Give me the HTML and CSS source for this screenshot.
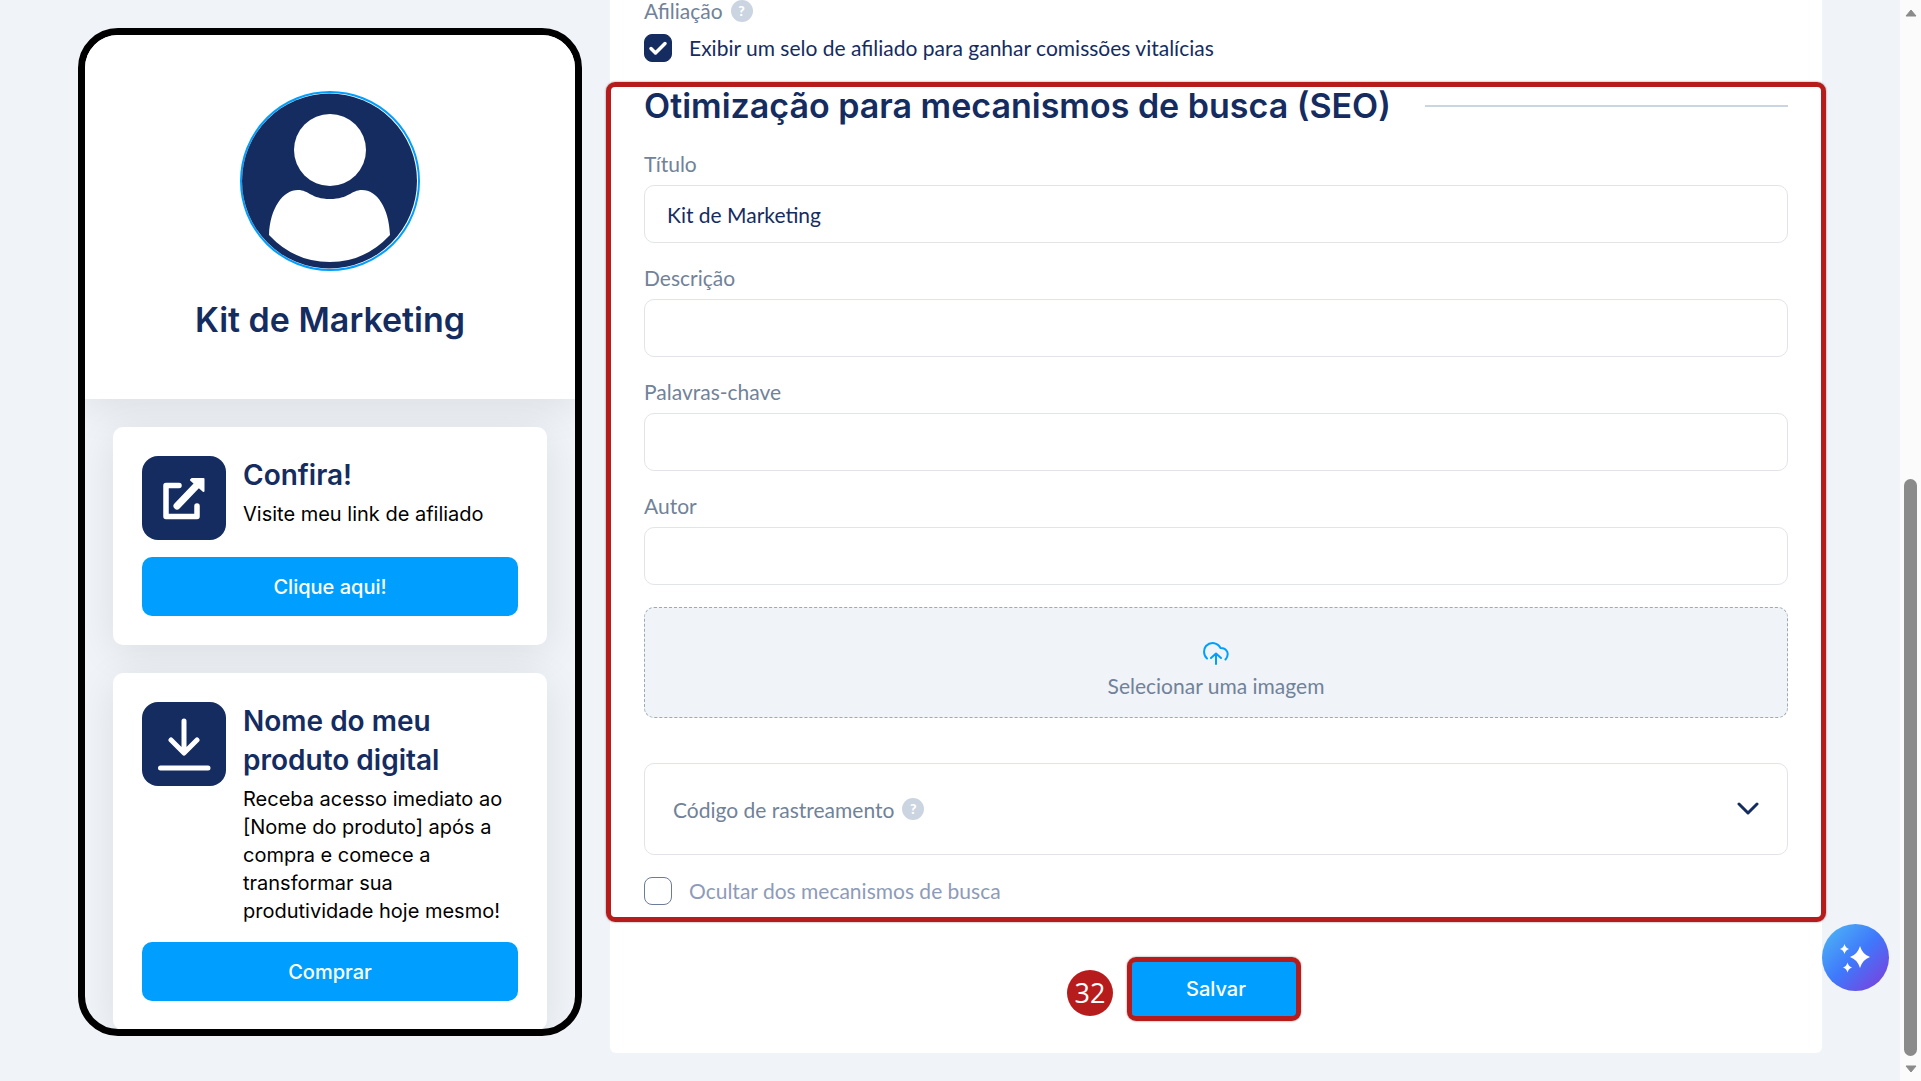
FILE: index.html
```
<!DOCTYPE html>
<html lang="pt-BR">
<head>
    <meta charset="UTF-8">
    <meta name="viewport" content="width=device-width, initial-scale=1.0">
    <title>Kit de Marketing</title>
    <link rel="stylesheet" href="styles.css">
</head>
<body>
    <div class="page">
        <!-- Phone Preview -->
        <aside class="phone">
            <div class="phone-header">
                <svg class="avatar" viewBox="0 0 180 180">
                    <circle cx="90" cy="90" r="89" fill="#fff" stroke="#009fff" stroke-width="2"/>
                    <circle cx="89.500" cy="90" r="87.500" fill="#152c61"/>
                    <circle cx="90" cy="59" r="36" fill="#fff"/>
                    <path d="M29 144C30 117 43 99 58 99C69 99 71 108 90 108C109 108 111 99 122 99C137 99 149 117 150 144Q125 171 90 171Q54 171 29 144Z" fill="#fff"/>
                </svg>
                <h1 class="phone-title">Kit de Marketing</h1>
            </div>

            <div class="cards">
                <div class="card">
                    <div class="card-top">
                        <svg class="card-icon" viewBox="0 0 84 84">
                            <rect width="84" height="84" rx="16" fill="#152c61"/>
                            <path d="M37 29.500H24V60.500H55V50" fill="none" stroke="#fff" stroke-width="5.500" stroke-linecap="round" stroke-linejoin="round"/>
                            <path d="M35 50L56 28" stroke="#fff" stroke-width="7" stroke-linecap="round"/>
                            <path d="M50 23H61.500V35L49 24Z" fill="#fff" stroke="#fff" stroke-width="2" stroke-linejoin="round"/>
                        </svg>
                        <div class="card-text">
                            <h2 class="card-title">Confira!</h2>
                            <p class="card-description">Visite meu link de afiliado</p>
                        </div>
                    </div>
                    <button class="action-btn">Clique aqui!</button>
                </div>

                <div class="card">
                    <div class="card-top">
                        <svg class="card-icon" viewBox="0 0 84 84">
                            <rect width="84" height="84" rx="16" fill="#152c61"/>
                            <path d="M42 19V50M29 38L42 51L55 38M18.500 66H66" fill="none" stroke="#fff" stroke-width="5" stroke-linecap="round" stroke-linejoin="round"/>
                        </svg>
                        <div class="card-text">
                            <h2 class="card-title">Nome do meu produto digital</h2>
                            <p class="card-description">Receba acesso imediato ao [Nome do produto] após a compra e comece a transformar sua produtividade hoje mesmo!</p>
                        </div>
                    </div>
                    <button class="action-btn">Comprar</button>
                </div>
            </div>
        </aside>

        <!-- Settings Panel -->
        <main class="panel">
            <div class="panel-row">
                <span>Afiliação</span>
                <span class="help">?</span>
            </div>
            <label class="check">
                <span class="check-box">
                    <input type="checkbox" checked>
                    <svg viewBox="0 0 28 28"><path d="M7 14.500L11.500 19L21 9.500" fill="none" stroke="#fff" stroke-width="3.500" stroke-linecap="round" stroke-linejoin="round"/></svg>
                </span>
                Exibir um selo de afiliado para ganhar comissões vitalícias
            </label>

            <!-- SEO -->
            <section class="seo marked">
                <div class="seo-heading">
                    <h2>Otimização para mecanismos de busca (SEO)</h2>
                </div>
                <div class="fields">
                    <div class="field">
                        <label for="seo-title">Título</label>
                        <input type="text" id="seo-title" value="Kit de Marketing">
                    </div>
                    <div class="field">
                        <label for="seo-description">Descrição</label>
                        <input type="text" id="seo-description">
                    </div>
                    <div class="field">
                        <label for="seo-keywords">Palavras-chave</label>
                        <input type="text" id="seo-keywords">
                    </div>
                    <div class="field">
                        <label for="seo-author">Autor</label>
                        <input type="text" id="seo-author">
                    </div>
                </div>
                <button class="upload">
                    <svg viewBox="0 0 26 24" width="26" height="24"><path d="M4 16.500C0 13 .5 7 3 4C8-1 15 1 17.500 6C24 6 27 12 22.500 17.500M13 22V12M8 16L13 11.500L18 16" fill="none" stroke="#009fff" stroke-width="2" stroke-linecap="round" stroke-linejoin="round"/></svg>
                    <span>Selecionar uma imagem</span>
                </button>
                <button class="tracking">
                    <span>Código de rastreamento</span>
                    <span class="help">?</span>
                    <svg class="chevron" viewBox="0 0 22 14" width="22" height="14"><path d="M2 2L11 11L20 2" fill="none" stroke="#152c61" stroke-width="3" stroke-linecap="round" stroke-linejoin="round"/></svg>
                </button>
                <label class="check check-muted">
                    <span class="check-box">
                        <input type="checkbox">
                    </span>
                    Ocultar dos mecanismos de busca
                </label>
            </section>

            <div class="actions">
                <div class="save marked">
                    <span class="step">32</span>
                    <button class="save-btn">Salvar</button>
                </div>
            </div>
        </main>
    </div>

    <!-- Scrollbar -->
    <div class="scrollbar">
        <svg viewBox="0 0 12 8" width="12" height="8"><path d="M6 1L11 7H1Z" fill="#8b8b8b" stroke="#8b8b8b" stroke-linejoin="round"/></svg>
        <div class="scroll-track"><div class="scroll-thumb"></div></div>
        <svg viewBox="0 0 12 8" width="12" height="8"><path d="M6 7L1 1H11Z" fill="#8b8b8b" stroke="#8b8b8b" stroke-linejoin="round"/></svg>
    </div>

    <!-- Assistant -->
    <button class="assistant" aria-label="Assistente">
        <svg viewBox="0 0 67 67"><path d="M38 22Q40.500 30.500 48 33Q40.500 35.500 38 44Q35.500 35.500 28 33Q35.500 30.500 38 22ZM22.500 20Q23.500 24 27 25Q23.500 26 22.500 30Q21.500 26 18 25Q21.500 24 22.500 20ZM25.500 38.500Q26.500 42.500 30 43.500Q26.500 44.500 25.500 48.500Q24.500 44.500 21 43.500Q24.500 42.500 25.500 38.500Z" fill="#fff"/></svg>
    </button>
</body>
</html>
```
FILE: styles.css
```
/* Global Styles */
:root {
    --navy: #152c61;
    --blue: #009fff;
    --red: #b71c1c;
    --muted: #718299;
    --line: #e1e4e8;
    --background: #f0f3f8;
    --shadow: 0 8px 40px rgba(0, 0, 0, 0.09);
    --heading-font: Inter, "Liberation Sans", sans-serif;
    --form-font: Lato, "Open Sans", sans-serif;
}

* {
    box-sizing: border-box;
}

body {
    display: flex;
    height: 100vh;
    margin: 0;
    overflow: hidden;
    background-color: var(--background);
    color: var(--navy);
    font-family: var(--heading-font);
    font-size: 20px;
}

h1, h2, p {
    margin: 0;
}

button {
    font-family: inherit;
    font-size: 20px;
    cursor: pointer;
}

.page {
    flex: 1;
    display: flex;
    align-items: flex-start;
    gap: 28px;
    padding: 0 78px;
}

/* Phone Preview */
.phone {
    flex: 0 0 504px;
    aspect-ratio: 1 / 2;
    min-height: 0;
    margin-top: 28px;
    border: 7px solid #000;
    border-radius: 40px;
    overflow: hidden;
    background-color: var(--background);
}

.phone-header {
    display: flex;
    flex-direction: column;
    align-items: center;
    gap: 26px;
    padding: 56px 28px;
    background-color: #fff;
    box-shadow: var(--shadow);
}

.avatar {
    width: 180px;
    height: 180px;
}

.phone-title {
    font-size: 34px;
    font-weight: 600;
    line-height: 46px;
}

.cards {
    display: flex;
    flex-direction: column;
    gap: 28px;
    padding: 28px;
}

.card {
    padding: 29px;
    border-radius: 10px;
    background-color: #fff;
    box-shadow: var(--shadow);
}

.card-top {
    display: flex;
    align-items: flex-start;
    gap: 17px;
    margin-bottom: 17px;
}

.card-icon {
    flex: none;
    width: 84px;
    height: 84px;
}

.card-title {
    margin-bottom: 5px;
    font-size: 28px;
    font-weight: 600;
    line-height: 39px;
}

.card-description {
    color: #000;
    line-height: 28px;
}

.action-btn {
    width: 100%;
    height: 59px;
    border: none;
    border-radius: 10px;
    background-color: var(--blue);
    color: #fff;
    font-weight: 500;
}

/* Settings Panel */
.panel {
    flex: 1;
    padding: 0 34px 35px;
    border-radius: 0 0 6px 6px;
    background-color: #fff;
    font-family: var(--form-font);
    font-size: 21px;
}

.panel-row {
    display: flex;
    align-items: center;
    gap: 8px;
    margin-bottom: 12px;
    color: var(--muted);
    line-height: 22px;
}

.help {
    width: 22px;
    height: 22px;
    border-radius: 50%;
    background-color: #cbd5e2;
    color: #fff;
    font-size: 14px;
    font-weight: 900;
    line-height: 22px;
    text-align: center;
}

.check {
    display: flex;
    align-items: center;
    gap: 17px;
    line-height: 28px;
}

.check-muted {
    color: #8e9bb8;
}

.check-box {
    display: grid;
    width: 28px;
    height: 28px;
}

.check-box > * {
    grid-area: 1 / 1;
}

.check-box input {
    appearance: none;
    width: 28px;
    height: 28px;
    margin: 0;
    border: 1px solid #6b7b99;
    border-radius: 8px;
}

.check-box input:checked {
    border-color: var(--navy);
    background-color: var(--navy);
}

.marked {
    position: relative;
}

/* Red frame around a marked step */
.marked::after {
    content: "";
    position: absolute;
    border: 5px solid var(--red);
    border-radius: 9px;
    box-shadow: 0 0 2px rgba(0, 0, 0, 0.5);
    pointer-events: none;
}

/* SEO */
.seo {
    margin-top: 21px;
}

.seo::after {
    inset: -1px -38px -17px;
}

.seo-heading {
    display: flex;
    align-items: center;
    gap: 34px;
    margin-bottom: 24px;
}

.seo-heading h2 {
    font-family: var(--heading-font);
    font-size: 34px;
    font-weight: 600;
    line-height: 46px;
}

.seo-heading::after {
    content: "";
    flex: 1;
    height: 2px;
    background-color: #cad5e2;
}

.fields {
    display: flex;
    flex-direction: column;
    gap: 24px;
    margin-bottom: 22px;
}

.field {
    display: flex;
    flex-direction: column;
    gap: 10px;
}

.field label {
    color: var(--muted);
    line-height: 22px;
}

.field input {
    height: 58px;
    padding: 0 22px;
    border: 1px solid var(--line);
    border-radius: 10px;
    color: var(--navy);
    font-family: inherit;
    font-size: 21px;
}

.upload {
    display: flex;
    flex-direction: column;
    align-items: center;
    gap: 6px;
    width: 100%;
    padding: 34px 0 18px;
    border: 1px dashed #9aabb5;
    border-radius: 10px;
    background-color: var(--background);
    color: var(--muted);
    font-size: 21px;
    line-height: 27px;
}

.tracking {
    display: flex;
    align-items: center;
    gap: 8px;
    width: 100%;
    height: 92px;
    margin: 45px 0 22px;
    padding: 0 28px;
    border: 1px solid var(--line);
    border-radius: 10px;
    background-color: #fff;
    color: var(--muted);
    font-size: 21px;
}

.chevron {
    margin-left: auto;
}

/* Actions */
.actions {
    display: flex;
    justify-content: center;
    margin-top: 55px;
}

.save::after {
    inset: -3px 0 -3px -4px;
}

.save-btn {
    display: block;
    width: 170px;
    height: 58px;
    border: none;
    border-radius: 8px;
    background-color: var(--blue);
    color: #fff;
    font-family: var(--heading-font);
    font-weight: 500;
}

.step {
    position: absolute;
    top: 10px;
    right: calc(100% + 18px);
    width: 46px;
    height: 46px;
    border-radius: 50%;
    background-color: var(--red);
    color: #fff;
    font-family: "Open Sans", "Noto Sans", sans-serif;
    font-size: 27px;
    line-height: 46px;
    text-align: center;
}

/* Scrollbar */
.scrollbar {
    display: flex;
    flex-direction: column;
    align-items: center;
    gap: 9px;
    width: 21px;
    padding: 9px 0 8px;
    background-color: #fbfbfb;
}

.scroll-track {
    flex: 1;
    display: flex;
    align-items: flex-end;
}

.scroll-thumb {
    width: 13px;
    height: 56%;
    border-radius: 7px;
    background-color: #8b8b8b;
}

/* Assistant */
.assistant {
    position: absolute;
    right: 32px;
    bottom: 90px;
    width: 67px;
    height: 67px;
    padding: 0;
    border: none;
    border-radius: 50%;
    background: linear-gradient(135deg, #4db5f5 5%, #3f78fb 50%, #7c3fdc 95%);
}
```
